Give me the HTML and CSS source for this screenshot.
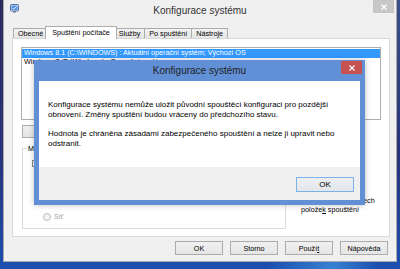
FILE: index.html
```html
<!DOCTYPE html>
<html lang="cs">
<head>
    <meta charset="UTF-8">
    <title>Konfigurace systému</title>
    <link rel="stylesheet" href="styles.css">
</head>
<body>
<div class="window">
    <div class="titlebar">
        <svg class="app-icon" viewBox="0 0 9 9">
            <rect x="0.5" y="0.5" width="8" height="6.5" rx="0.8" fill="#e8eef8" stroke="#5b6f9a"/>
            <rect x="1.5" y="1.5" width="6" height="4.5" fill="#4f8fe0"/>
            <path d="M2.5 4.2 L3.8 5.2 L6.4 2.4" stroke="#fff" stroke-width="0.9" fill="none"/>
            <rect x="3" y="7.2" width="3" height="1.3" fill="#5b6f9a"/>
        </svg>
        <div class="title">Konfigurace systému</div>
        <div class="close">
            <svg viewBox="0 0 6 6"><path d="M0.5 0.5 L5.5 5.5 M5.5 0.5 L0.5 5.5" stroke="#fff" stroke-width="1.2"/></svg>
        </div>
    </div>
    <div class="client">
        <div class="tabs">
            <div class="tab">Obecné</div>
            <div class="tab active">Spuštění počítače</div>
            <div class="tab">Služby</div>
            <div class="tab">Po spuštění</div>
            <div class="tab">Nástroje</div>
        </div>
        <div class="panel">
            <div class="listbox">
                <div class="item selected">Windows 8.1 (C:\WINDOWS) : Aktuální operační systém; Výchozí OS</div>
                <div class="item">Windows 7 (D:\Windows) : Operační systém</div>
            </div>
            <!-- covered by the message box -->
            <div class="list-buttons">
                <button class="btn wide"></button>
                <button class="btn wide"></button>
                <button class="btn"></button>
            </div>
            <div class="options">
                <div class="group">
                    <span class="legend">Možnosti spuštění</span>
                    <div class="opt-grid">
                        <div class="opt"><span class="box"></span>Bezpečné spuštění</div>
                        <div class="opt"><span class="box"></span>Bez spouštěcího GUI</div>
                        <div class="opt indent off"><span class="radio"></span>Minimální</div>
                        <div class="opt"><span class="box"></span>Protokol spouštění</div>
                        <div class="opt indent off"><span class="radio"></span>Alternativní prostředí</div>
                        <div class="opt"><span class="box"></span>Základní video</div>
                        <div class="opt indent off"><span class="radio"></span>Oprava služby AD</div>
                        <div class="opt"><span class="box"></span>Informace o spouštění OS</div>
                        <div class="opt indent off last"><span class="radio"></span>Síť</div>
                    </div>
                </div>
                <div class="side">
                    <div class="timeout">
                        <div>Časový limit:</div>
                        <div class="timeout-row"><span class="field">30</span>sekund</div>
                    </div>
                    <div class="opt permanent"><span class="box"></span><span>Trvalá nastavení všech<br>polože<u>k</u> spouštění</span></div>
                </div>
            </div>
        </div>
        <div class="footer">
            <button class="btn">OK</button>
            <button class="btn">Storno</button>
            <button class="btn">Použí<u>t</u></button>
            <button class="btn">Nápověda</button>
        </div>
    </div>
</div>

<div class="dialog">
    <div class="dialog-bar">
        <div></div>
        <div class="title">Konfigurace systému</div>
        <div class="close red">
            <svg viewBox="0 0 6 6"><path d="M0.5 0.5 L5.5 5.5 M5.5 0.5 L0.5 5.5" stroke="#fff" stroke-width="1.2"/></svg>
        </div>
    </div>
    <div class="dialog-body">
        <p>Konfigurace systému nemůže uložit původní spouštěcí konfiguraci pro pozdější<br>obnovení. Změny spuštění budou vráceny do předchozího stavu.</p>
        <p>Hodnota je chráněna zásadami zabezpečeného spouštění a nelze ji upravit nebo<br>odstranit.</p>
    </div>
    <div class="dialog-foot">
        <button class="btn ok">OK</button>
    </div>
</div>
</body>
</html>
```

FILE: styles.css
```css
body{margin:0;width:400px;height:269px;overflow:hidden;position:relative;font-family:"Liberation Sans",Arial,sans-serif;color:#000;
    background:linear-gradient(100deg,rgba(90,190,255,0) 70%,rgba(90,190,255,.45) 85%,rgba(90,190,255,0) 95%),linear-gradient(#2e2a5e,#28337c 60%,#1b4fb0);}

.window{margin-left:3px;width:394px;height:262px;box-sizing:border-box;border:1px solid #a9a9a9;border-top:none;background:#f0f0f0;}
.titlebar{display:grid;grid-template-columns:1fr auto 1fr;height:21px;align-items:start;}
.app-icon{width:9px;height:9px;margin:4px 0 0 6px;}
.title{font-size:10px;line-height:21px;color:#333;white-space:nowrap;}
.close{justify-self:end;width:21px;height:13px;margin-right:2px;background:#c7c7c7;display:flex;align-items:center;justify-content:center;}
.close svg{width:6px;height:6px;}

.client{padding:0 6px 0 8px;}
.tabs{display:flex;align-items:flex-end;height:12px;margin:5px 0 0 2px;font-size:7.2px;}
.tab{height:10px;box-sizing:border-box;border:1px solid #acacac;border-bottom:none;margin-left:-1px;padding:0 4px;line-height:9px;white-space:nowrap;background:linear-gradient(#f2f2f2,#e5e5e5);}
.tab.active{height:13px;margin:0 -2px -1px -3px;padding:0 6px;line-height:11px;background:#fff;position:relative;z-index:1;}

.panel{height:199px;box-sizing:border-box;border:1px solid #d9d9d9;background:#fff;padding:8px 8px 0;font-size:7.2px;}
.listbox{height:73px;box-sizing:border-box;border:1px solid #abadb3;padding-top:1px;line-height:8.5px;}
.item{padding-left:2px;white-space:nowrap;}
.item.selected{background:#3399ff;color:#fff;}
.list-buttons{display:flex;gap:6px;margin:5px 0 0 1px;}
.list-buttons .btn{height:13px;width:52px;}
.list-buttons .btn.wide{width:78px;}

.btn{font:inherit;font-size:7.2px;color:#000;width:48px;height:14px;padding:0;border:1px solid #acacac;background:linear-gradient(#f0f0f0,#e5e5e5);white-space:nowrap;}

.options{display:flex;margin-top:10px;}
.group{width:267px;box-sizing:border-box;margin-left:1px;border:1px solid #dcdcdc;padding:0 0 5px 9px;}
.legend{display:block;width:max-content;margin:-5px 0 0 -5px;padding:0 1px;background:#fff;line-height:9px;}
.opt-grid{display:grid;grid-template-columns:131px auto;grid-template-rows:repeat(4,12.3px) 17px;margin-top:4px;}
.opt{display:flex;align-items:center;gap:3px;white-space:nowrap;}
.opt.indent{padding-left:11px;}
.opt.off{color:#a0a0a0;}
.opt.last{align-self:end;height:9px;margin-bottom:2px;}
.box{width:7px;height:7px;box-sizing:border-box;border:1px solid #8a8a8a;background:#fff;flex:none;}
.radio{width:8px;height:8px;box-sizing:border-box;border:1px solid #bcbcbc;border-radius:50%;background:#f4f4f4;flex:none;}

.side{display:flex;flex-direction:column;justify-content:space-between;margin-left:4px;width:92px;}
.timeout{line-height:9px;padding-top:2px;}
.timeout-row{display:flex;align-items:center;gap:3px;margin-top:2px;}
.field{width:34px;height:11px;box-sizing:border-box;border:1px solid #abadb3;padding-left:2px;line-height:9px;}
.permanent{align-items:flex-start;line-height:9px;margin-bottom:15px;}
.permanent .box{width:8px;height:8px;margin-top:0;}

.footer{display:flex;justify-content:flex-end;gap:7px;margin-top:4px;padding-right:2px;}

.dialog{position:absolute;left:34px;top:60px;width:331px;height:145px;box-sizing:border-box;padding:0 5px 5px;background:#6190d6;display:flex;flex-direction:column;box-shadow:0 0 6px rgba(0,0,0,.25);}
.dialog-bar{display:grid;grid-template-columns:1fr auto 1fr;height:21px;margin:0 -5px;align-items:start;}
.dialog-bar .title{color:#222;}
.close.red{background:#c75050;margin:1px 3px 0 0;}
.dialog-body{flex:1;background:#fff;padding:19px 9px 0;font-size:8px;line-height:10px;}
.dialog-body p{margin:0 0 9px;white-space:nowrap;}
.dialog-foot{height:33px;box-sizing:border-box;background:#f0f0f0;padding:10px 6px 0 0;display:flex;justify-content:flex-end;align-items:flex-start;}
.btn.ok{width:58px;height:15px;font-size:8px;border-color:#7db2e8;background:linear-gradient(#eceff3,#e3e6ea);}
```
